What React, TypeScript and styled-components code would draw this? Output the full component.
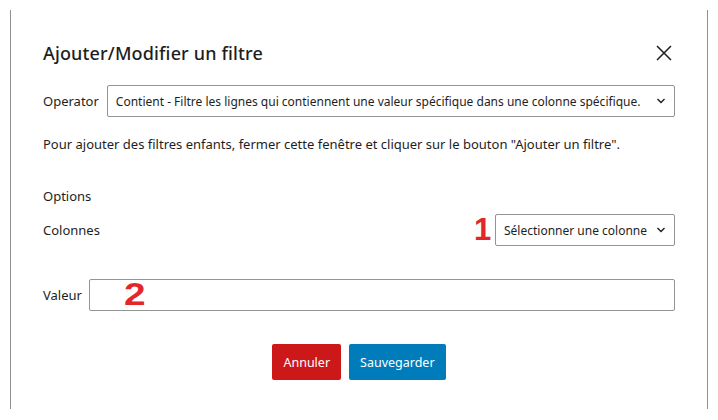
import { createGlobalStyle } from "styled-components";
import styled from "styled-components";

const GlobalStyle = createGlobalStyle`
  html, body {
    margin: 0;
    padding: 0;
    background: #ffffff;
  }
  body {
    font-family: "Noto Sans", "Open Sans", sans-serif;
    color: #1e1e1e;
    -webkit-font-smoothing: antialiased;
  }
`;

const Frame = styled.div`
  box-sizing: border-box;
  margin: 10px 0 0 10px;
  width: 698px;
  height: 399px;
  padding: 0 32px;
  border-left: 1px solid #8f8f8f;
  border-right: 1px solid #8f8f8f;
  background: #fff;
`;

const Header = styled.header`
  display: flex;
  align-items: center;
  justify-content: space-between;
  height: 40px;
  padding-top: 23px;
`;

const Title = styled.h1`
  margin: 0;
  font-size: 18px;
  font-weight: 500;
  line-height: 24px;
  letter-spacing: 0.15px;
  color: #1e1e1e;
`;

const CloseButton = styled.button`
  display: flex;
  align-items: center;
  justify-content: center;
  width: 16px;
  height: 16px;
  margin-right: 3px;
  padding: 0;
  border: 0;
  background: none;
  cursor: pointer;
  color: #1e1e1e;
`;

const Row = styled.div<{ $gap?: number; $spread?: boolean }>`
  display: flex;
  align-items: center;
  height: 32px;
  margin-top: ${(p) => p.$gap ?? 0}px;
  justify-content: ${(p) => (p.$spread ? "space-between" : "flex-start")};
`;

const Label = styled.span<{ $space?: number }>`
  font-size: 13px;
  line-height: 20px;
  margin-right: ${(p) => p.$space ?? 0}px;
  white-space: nowrap;
`;

const Text = styled.p<{ $gap: number }>`
  margin: ${(p) => p.$gap}px 0 0;
  font-size: 13px;
  line-height: 20px;
`;

const FieldWrap = styled.div<{ $grow?: boolean; $width?: number }>`
  position: relative;
  flex: ${(p) => (p.$grow ? "1" : "none")};
  width: ${(p) => (p.$width ? `${p.$width}px` : "auto")};
  height: 32px;
`;

const SelectBox = styled.div`
  box-sizing: border-box;
  display: flex;
  align-items: center;
  justify-content: space-between;
  height: 32px;
  padding: 0 8px 0 8px;
  border: 1px solid #949494;
  border-radius: 2px;
  font-size: 12px;
  color: #1e1e1e;
  white-space: nowrap;
  overflow: hidden;
`;

const InputBox = styled.div`
  box-sizing: border-box;
  height: 32px;
  border: 1px solid #949494;
  border-radius: 2px;
`;

const Mark = styled.span<{ $left: number; $stretch?: number }>`
  position: absolute;
  left: ${(p) => p.$left}px;
  top: 0px;
  font-family: "Liberation Sans", "DejaVu Sans", sans-serif;
  font-size: 31px;
  font-weight: 700;
  line-height: 32px;
  color: #e2262c;
  transform: scaleX(${(p) => p.$stretch ?? 1});
  transform-origin: left center;
`;

const Actions = styled.div`
  display: flex;
  justify-content: center;
  gap: 8px;
  margin-top: 33px;
`;

const Button = styled.button<{ $tone: "danger" | "primary" }>`
  height: 36px;
  padding: 0 11px;
  border: 0;
  border-radius: 2px;
  font-family: "Noto Sans", "Open Sans", sans-serif;
  font-size: 12.5px;
  color: #fff;
  background: ${(p) => (p.$tone === "danger" ? "#cc1818" : "#007cba")};
  cursor: pointer;
`;

const Chevron = () => (
  <svg width="10" height="6" viewBox="0 0 10 6" fill="none">
    <path d="M1.5 1l3.5 3.5L8.5 1" stroke="#1e1e1e" strokeWidth="1.4" />
  </svg>
);

export default function App() {
  return (
    <>
      <GlobalStyle />
      <Frame>
        <Header>
          <Title>Ajouter/Modifier un filtre</Title>
          <CloseButton aria-label="Fermer">
            <svg width="16" height="16" viewBox="0 0 16 16">
              <path d="M1 1l14 14M15 1L1 15" stroke="currentColor" strokeWidth="1.5" />
            </svg>
          </CloseButton>
        </Header>

        <Row $gap={12}>
          <Label $space={8}>Operator</Label>
          <FieldWrap $grow>
            <SelectBox>
              <span>Contient - Filtre les lignes qui contiennent une valeur spécifique dans une colonne spécifique.</span>
              <Chevron />
            </SelectBox>
          </FieldWrap>
        </Row>

        <Text $gap={17}>
          Pour ajouter des filtres enfants, fermer cette fenêtre et cliquer sur le bouton "Ajouter un filtre".
        </Text>

        <Text $gap={32}>Options</Text>

        <Row $gap={8} $spread>
          <Label>Colonnes</Label>
          <FieldWrap $width={180}>
            <Mark $left={-21}>1</Mark>
            <SelectBox>
              <span>Sélectionner une colonne</span>
              <Chevron />
            </SelectBox>
          </FieldWrap>
        </Row>

        <Row $gap={33}>
          <Label $space={7}>Valeur</Label>
          <FieldWrap $grow>
            <InputBox />
            <Mark $left={35} $stretch={1.25}>2</Mark>
          </FieldWrap>
        </Row>

        <Actions>
          <Button $tone="danger">Annuler</Button>
          <Button $tone="primary">Sauvegarder</Button>
        </Actions>
      </Frame>
    </>
  );
}
